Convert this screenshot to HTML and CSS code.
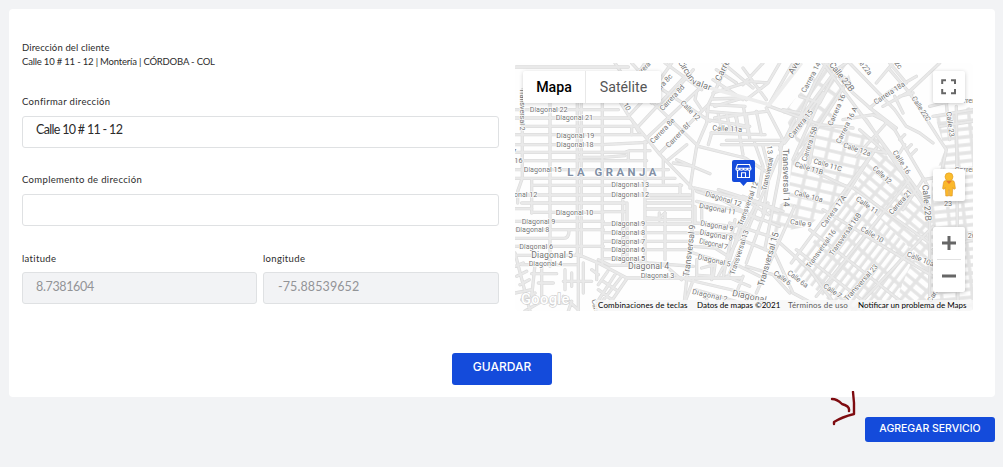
FILE: index.html
```html
<!DOCTYPE html>
<html lang="es">
<head>
<meta charset="utf-8">
<title>Dirección del cliente</title>
<link rel="stylesheet" href="styles.css">
</head>
<body>
<main class="card">
  <div class="columns">
    <form class="form">
      <div class="summary"><p><span class="t-title">Dirección del cliente</span></p><p><span class="t-addr">Calle 10 # 11 - 12 | Montería | CÓRDOBA - COL</span></p></div>
      <div class="field"><span class="label">Confirmar dirección</span><div class="input"><span class="t-calle">Calle 10 # 11 - 12</span></div></div>
      <div class="field"><span class="label">Complemento de dirección</span><div class="input"></div></div>
      <div class="pair">
        <div class="field"><span class="label low">latitude</span><div class="input disabled lat">8.7381604</div></div>
        <div class="field"><span class="label low">longitude</span><div class="input disabled">-75.88539652</div></div>
      </div>
    </form>
    <section class="map">
      <svg class="streets" viewBox="0 0 1374 744" width="458" height="248">
        <defs>
          <pattern id="p-trans" width="74" height="21" patternUnits="userSpaceOnUse" patternTransform="translate(860 600) rotate(-53) skewX(-5)"><rect width="74" height="21" class="ground"/><rect x="5" y="5" width="64" height="12" rx="2" class="block"/></pattern>
          <pattern id="p-mid" width="48" height="31" patternUnits="userSpaceOnUse" patternTransform="translate(830 300) rotate(13)"><rect width="48" height="31" class="ground"/><rect x="5" y="5" width="38" height="21" rx="2" class="block"/></pattern>
          <pattern id="p-east" width="46" height="24" patternUnits="userSpaceOnUse" patternTransform="translate(1300 10) rotate(-6)"><rect width="46" height="24" class="ground"/><rect x="5" y="5" width="36" height="14" rx="2" class="block"/></pattern>
          <pattern id="p-north" width="58" height="34" patternUnits="userSpaceOnUse" patternTransform="translate(880 40) rotate(-55)"><rect width="58" height="34" class="ground"/><rect x="6" y="6" width="47" height="23" rx="2" class="block"/></pattern>
          <pattern id="p-se" width="44" height="25" patternUnits="userSpaceOnUse" patternTransform="translate(1130 400) rotate(40)"><rect width="44" height="25" class="ground"/><rect x="5" y="5" width="34" height="15" rx="2" class="block"/></pattern>
          <g id="roads">
            <path d="M0 12H340M0 140H310M0 165H345M30 190H358M0 215H385M0 245H260L395 238M0 268H330L345 263H405M190 283H265L330 278M0 293H395M0 320H460M0 346H480M50 367H500M0 396H525M20 420H330M0 437H50M50 448H265M265 446H330M0 475H265M0 500H265M0 526H145Q162 526 162 503M0 550H265M0 577H190M20 605H185"/>
            <path d="M22 80V345L8 385V420M105 120V610M187 120V575M199 120V575M262 110V605M50 350V450M323 395V600M336 420V600M390 235V605M350 190V215M445 285V360M495 365V395M340 265V293M433 450V472M450 450V590"/>
            <path d="M265 483H530M265 509H530M265 535H530M265 560H530M265 587H330M395 405H530M395 420H530M395 438H530M395 470H530M395 465L432 466L450 450M330 585L400 600L535 610M540 480L660 490M540 510L660 515M535 550L600 555L640 580"/>
            <path d="M185 573L250 600L335 645H680M250 590L285 607H450L500 650M335 648L275 735M320 640L258 720M300 635L245 720M278 625L250 665M265 655L310 685M250 680L290 710M245 600V650M190 575V744M205 600V690M145 655H230M150 620V680M170 630V670M230 620L250 635"/>
            <path d="M0 570L45 744M60 605L50 700M80 610V700M50 632H125M70 660H115M0 610L25 600M5 640L35 625M15 665L43 650M0 690L50 680M20 710L60 690M30 744L80 715L150 720M160 744L170 715M145 700L190 740"/>
            <path d="M305 100L345 165L435 275L535 378M345 155L410 85L470 0M370 190L510 40M395 225L555 75M435 270L580 125M435 75L585 175M395 100L550 250M350 60L410 120M535 20L440 130M460 290L515 245M450 0L560 80M370 205L350 170M300 0L370 110M350 0L410 65M390 0L360 45"/>
            <path d="M533 375V485L505 744M525 375L535 310L545 250L575 180L580 125L640 0M560 140L540 110L545 85M485 290L585 332M475 300L535 310M540 375L690 410L760 455M545 415L680 445M560 420V475M540 430V480M550 250L690 285L760 330M545 385L620 410L730 470M610 380L690 405L790 445M575 145L690 155M590 108L680 105M590 125L690 130M575 170L700 190M588 210L750 215M590 210L580 245M610 155L620 200M635 155L645 195M660 155L670 190M685 130L700 215"/>
            <path d="M510 648L690 690L760 720M535 650L500 744M590 590V650M560 615L600 605L595 640L550 637M545 590V640M640 640L790 280M610 640L720 430M660 470L625 640M535 570L630 600M540 680L680 720M575 710L565 744M610 700L600 744"/>
          </g>
          <g id="roads-east">
            <path d="M-85 130L0 105M-85 165L70 145M-70 205L20 190M-50 232H120M-65 245H115M-20 160L0 275M10 155L20 225M40 145L55 215M70 135L125 240L240 90M75 130L150 0M80 130L230 185L330 195M0 15L70 110M10 110L75 60M-90 50L0 110M-90 90L20 55L75 60L110 0M-60 0L30 75M0 65L60 0M-80 20L-20 60"/>
            <path d="M35 240L60 310L45 400M60 250L80 330L60 450M115 240L110 330L85 460L65 560M0 400L120 445M-20 440L110 490M-40 480L95 525M-30 520L80 565M20 400L-40 590M75 420L10 600M155 430L40 690M10 610L90 635L140 690M-30 600L50 640M-50 640L20 670M0 640L-20 690M90 560L150 690L250 744M100 530L200 620L290 744"/>
            <path d="M110 250L280 20L310 0M150 290L240 90M155 300L230 185L310 60M160 300L320 375M200 300L220 190M150 210L215 60L250 0M170 100L230 120L270 45M120 140L170 150M155 170L110 260M240 0L560 430M250 0L330 90L455 200L555 370M375 130L460 195M300 170L390 155L420 170M350 200L430 270M320 250L430 270M370 170L550 440M340 280L430 180M300 410L390 270"/>
            <path d="M320 0L455 140L490 190L530 210L570 240M440 20L500 90L590 230L610 260L595 330M420 130L500 85L590 0M380 135L440 85L520 40M440 0L490 60M400 60L450 0M455 100L480 150M470 100L510 90M485 245L470 270M470 230L485 215M490 260L505 245M505 275L520 260M600 340L540 350L480 440M560 130L640 110M570 160L690 140M590 190L690 175M610 120L620 230M640 130L645 744M570 560L690 530M560 430V744"/>
            <path d="M145 600L400 255M220 700L500 350M330 744L570 490M330 375L560 540M240 440L570 640M200 500L510 744M160 560L400 744"/>
          </g>
        </defs>
        <rect width="1374" height="744" class="land"/>
        <path fill="url(#p-north)" d="M805 150L930 0H990L1010 60L940 210L860 270Z"/>
        <path fill="url(#p-mid)" d="M830 290L920 180L1100 230L1000 390L880 490L780 510L750 450L820 410Z"/>
        <path fill="url(#p-trans)" d="M830 620L1010 385L1240 570L1150 744H980Z"/>
        <path fill="url(#p-se)" d="M1010 385L1090 250L1250 430V744H1130L1200 570Z"/>
        <path fill="url(#p-east)" d="M1250 360L1290 260L1260 160L1374 130V744H1240Z"/>
        <use href="#roads" class="casing"/><g transform="translate(684 0)"><use href="#roads-east" class="casing"/></g>
        <use href="#roads" class="road"/><g transform="translate(684 0)"><use href="#roads-east" class="road"/></g>
        <path class="avenue" d="M585 75L763 125L860 0"/>
        <g class="names">
          <text x="44" y="147" textLength="114">Diagonal 22</text><text x="122" y="172" textLength="112">Diagonal 21</text>
          <text x="124" y="224" textLength="114">Diagonal 19</text><text x="124" y="251" textLength="112">Diagonal 18</text>
          <text x="26" y="326" textLength="114">Diagonal 15</text><text x="289" y="373" textLength="113">Diagonal 13</text>
          <text x="289" y="403" textLength="113">Diagonal 12</text><text x="-46" y="403" textLength="113">Diagonal 12</text>
          <text x="122" y="455" textLength="113">Diagonal 10</text><text x="20" y="482" textLength="101">Diagonal 9</text>
          <text x="2" y="506" textLength="101">Diagonal 8</text><text x="13" y="558" textLength="101">Diagonal 6</text>
          <text x="41" y="610" textLength="101">Diagonal 4</text><text x="289" y="490" textLength="101">Diagonal 9</text>
          <text x="289" y="516" textLength="101">Diagonal 8</text><text x="289" y="542" textLength="101">Diagonal 7</text>
          <text x="289" y="568" textLength="101">Diagonal 6</text><text x="289" y="594" textLength="101">Diagonal 5</text>
          <text x="377" y="644" textLength="101">Diagonal 3</text><text x="-8" y="273">7</text><text x="-2" y="301">16</text>
          <text class="big" x="49" y="585" textLength="125">Diagonal 5</text><text class="big" x="339" y="619" textLength="124">Diagonal 4</text>
          <text transform="translate(14 76) rotate(90)" textLength="127">Transversal 2</text>
          <text transform="translate(316 111) rotate(60)" textLength="39">e 10</text>
          <text transform="translate(414 243) rotate(-46)" textLength="96">Carrera 8e</text><text transform="translate(461 256) rotate(-46)" textLength="95">Carrera 8f</text>
          <text transform="translate(443 145) rotate(-47)" textLength="98">Carrera 8d</text><text transform="translate(407 113) rotate(-47)" textLength="98">Carrera 8c</text>
          <text transform="translate(362 52) rotate(-46)" textLength="94">Carrera 8a</text><text transform="translate(495 121) rotate(46)" textLength="74">Calle 12</text>
          <text class="big" transform="translate(488 -2) rotate(57)" textLength="70">Circun</text><text class="big" transform="translate(529 62) rotate(20)" textLength="60">valar</text>
          <text transform="translate(616 56) rotate(-65)" class="big" textLength="90">Carrera</text><text transform="translate(592 202) rotate(3)" textLength="89">Calle 11a</text>
          <text transform="translate(569 398) rotate(17)" textLength="113">Diagonal 12</text><text transform="translate(551 434) rotate(11)" textLength="112">Diagonal 11</text>
          <text transform="translate(555 487) rotate(10)" textLength="101">Diagonal 9</text><text transform="translate(553 514) rotate(11)" textLength="101">Diagonal 8</text>
          <text transform="translate(551 540) rotate(13)" textLength="88">Diagonal 7</text><text transform="translate(547 588) rotate(13)" textLength="101">Diagonal 5</text>
          <text transform="translate(530 692) rotate(13)" textLength="108">Diagonal 2</text><text class="big" transform="translate(650 698) rotate(12)" textLength="105">Diagonal</text>
          <text class="big" transform="translate(522 642) rotate(-83)" textLength="157">Transversal 9</text>
          <text transform="translate(658 637) rotate(-72)" textLength="140">Transversal 13</text><text transform="translate(682 490) rotate(-70)" textLength="140">Transversal 12</text>
          <text transform="translate(230 710) rotate(80)" textLength="70">Carrera</text>
          <text class="district" x="157" y="338" textLength="267">LA GRANJA</text>
        </g>
        <g class="names" transform="translate(684 0)">
          <text class="big" transform="translate(150 35) rotate(-60)">Avenida</text><text transform="translate(187 91) rotate(-62)" textLength="100">Carrera 14</text>
          <text class="big" transform="translate(257 5) rotate(52)" textLength="105">Calle 22B</text><text transform="translate(330 -22) rotate(52)" textLength="76">Calle 22a</text>
          <text transform="translate(410 -50) rotate(50)">Calle 22c</text><text transform="translate(398 125) rotate(-33)" textLength="107">Carrera 18a</text>
          <text transform="translate(505 106) rotate(57)" textLength="86">Calle 22C</text><text transform="translate(610 147) rotate(83)" textLength="76">Calle 23</text>
          <text transform="translate(267 190) rotate(-66)" textLength="101">Carrera 16</text><text transform="translate(291 244) rotate(-64)" textLength="120">Carrera 16 A</text>
          <text transform="translate(146 228) rotate(-51)" textLength="103">Carrera 15</text><text transform="translate(190 296) rotate(-72)" textLength="108">Carrera 15B</text>
          <text transform="translate(299 252) rotate(19)" textLength="86">Calle 12a</text><text transform="translate(210 300) rotate(17)" textLength="88">Calle 11C</text>
          <text transform="translate(154 310) rotate(17)" textLength="88">Calle 11B</text><text transform="translate(448 268) rotate(57)" textLength="80">Calle 16</text>
          <text transform="translate(387 318) rotate(43)" textLength="69">Calle 12</text><text transform="translate(152 395) rotate(15)" textLength="88">Calle 10a</text>
          <text transform="translate(337 411) rotate(35)" textLength="76">Calle 11</text><text transform="translate(140 482) rotate(10)" textLength="65">Calle 9</text>
          <text transform="translate(351 502) rotate(30)" textLength="76">Calle 10</text><text transform="translate(490 579) rotate(22)" textLength="86">Calle 10a</text>
          <text transform="translate(90 634) rotate(36)" textLength="59">Calle 6</text><text transform="translate(131 632) rotate(37)" textLength="72">Calle 6a</text><text transform="translate(239 673) rotate(33)" textLength="61">Calle 7</text>
          <text transform="translate(447 456) rotate(-48)" textLength="91">Carrera 21</text><text transform="translate(244 495) rotate(-54)" textLength="114">Carrera 17A</text>
          <text transform="translate(200 617) rotate(-54)" textLength="137">Transversal 16</text><text transform="translate(269 580) rotate(-55)" textLength="151">Transversal 16B</text>
          <text transform="translate(313 715) rotate(-48)" textLength="139">Transversal 23</text><text class="big" transform="translate(61 672) rotate(-74)" textLength="168">Transversal 15</text>
          <text class="big" transform="translate(119 257) rotate(89)" textLength="174">Transversal 14</text><text class="big" transform="translate(538 366) rotate(85)" textLength="109">Calle 22B</text>
          <text transform="translate(70 384) rotate(-78)" textLength="102">Transversal</text><text transform="translate(71 248) rotate(84)" textLength="26">13</text>
          <text x="635" y="120">Carrera</text><text x="635" y="326">Carrera</text><text x="674" y="526">26</text><text x="603" y="430">23</text>
          <text transform="translate(565 720) rotate(-60)">Carrera</text>
        </g>
        <text x="18" y="724" class="google" textLength="145">Google</text>
      </svg>
      <div class="maptypes"><span class="active">Mapa</span><span class="sat">Satélite</span></div>
      <div class="ctl full"><svg width="16" height="16" viewBox="0 0 16 16"><path d="M1.2 5V1.2H5M10 1.2h4V5M14 10v4.2h-4M5 14.2H1.2V10" fill="none" stroke="#666" stroke-width="2"/></svg></div>
      <div class="ctl pegman"><svg width="16" height="26" viewBox="0 0 16 26"><path d="M4.7 8.5h6.6q2 .2 2.2 2l.9 6q-1 1.2-2.1.2l-.5-1.2-.6 8.5H8.5V18h-1v6H4.8l-.6-8.5-.5 1.2q-1.2 1-2.1-.2l.9-6q.2-1.8 2.2-2Z" fill="#fbb82b" stroke="#db9321" stroke-width=".6"/><path d="M5.2 9h5.6L8 12Z" fill="#e8752c"/><circle cx="8" cy="4.8" r="4" fill="#fbbd2d" stroke="#df9a24" stroke-width=".6"/></svg></div>
      <div class="ctl zoom"><svg width="32" height="65" viewBox="0 0 32 65"><path d="M9 16H23M16 9V23M9 49H23" stroke="#666" stroke-width="3"/><path d="M4 32.5H28" stroke="#e2e2e2"/></svg></div>
      <svg class="pin" width="24" height="27" viewBox="0 0 24 27"><path d="M2 0h19q2 0 2 2v18q0 2-2 2h-6l-3.5 4L8 22H2q-2 0-2-2V2Q0 0 2 0Z" fill="#144bdb"/><g fill="none" stroke="#fff" stroke-width="1.1"><path d="M5.5 4.5h12l1.5 4.2q0 1.6-1.7 1.6t-2-1.5q-.3 1.5-2 1.5t-1.9-1.5q-.2 1.5-1.9 1.5T7.6 8.8q-.3 1.5-2 1.5T4 8.7ZM5.5 10.5v7h12v-7M9.5 17.5v-4.7h4v4.7M4.2 8.2h14.6"/></g></svg>
      <div class="legal"><span class="k">Combinaciones de teclas</span><span class="d">Datos de mapas ©2021</span><span class="u">Términos de uso</span><span class="n">Notificar un problema de Maps</span></div>
    </section>
  </div>
  <div class="actions"><button class="save"><span>GUARDAR</span></button></div>
</main>
<footer class="footer"><button class="add"><span>AGREGAR SERVICIO</span></button></footer>
<svg class="arrow" width="28" height="36" viewBox="0 0 28 36"><path d="M3 8Q8 8 13 13Q21 15 20 20M24 1L25 12V23Q13 26 5 31V33" fill="none" stroke="#7e0b10" stroke-width="2.4" stroke-linecap="round" stroke-linejoin="round"/></svg>
</body>
</html>
```
FILE: styles.css
```css
* { box-sizing: border-box; }
body { margin: 0; width: 1003px; height: 467px; overflow: hidden; background: #f2f3f5; padding: 9px 8px 0 9px; font: 9.5px/14px Lato, sans-serif; color: #2b2b2b; }
p { margin: 0; }
.card { height: 388px; background: #fff; border-radius: 4px; padding: 32px 22px 0 13px; }
.columns { display: flex; gap: 16px; height: 312px; }
.form { width: 477px; }
.summary { height: 54px; }
.field { height: 78px; }
.label { display: block; height: 21px; letter-spacing: .34px; }
.low { padding-top: 1px; }
.t-title { letter-spacing: .13px; }
.t-addr { letter-spacing: -.19px; }
.input { height: 32px; border: 1px solid #dfe1e3; border-radius: 3px; padding: 4px 13px; font-size: 12.5px; line-height: 18px; background: #fff; }
.t-calle { letter-spacing: -.68px; }
.disabled { padding-top: 5px; background: #f2f3f5; color: #929497; letter-spacing: .1px; }
.lat { letter-spacing: -.35px; }
.pair { display: grid; grid-template-columns: 235px 236px; gap: 6px; }
.pair .field + .field .input { padding-left: 14px; }
.map { position: relative; width: 458px; height: 248px; margin-top: 22px; overflow: hidden; border-radius: 4px; }
.streets { display: block; }
.land, .block { fill: #fefefe; }
.ground { fill: #e4e4e4; }
.casing { fill: none; stroke: #dcdcdc; stroke-width: 10; stroke-linecap: round; stroke-linejoin: round; }
.road { fill: none; stroke: #e9e9e9; stroke-width: 6; stroke-linecap: round; stroke-linejoin: round; }
.avenue { fill: none; stroke: #ededed; stroke-width: 11; }
.names { font: 22px Roboto, sans-serif; fill: #747474; stroke: #fff; stroke-width: 4px; stroke-linejoin: round; paint-order: stroke; }
.big { font-size: 26.5px; }
.district { font-size: 34px; font-weight: 700; fill: #8290a5; }
.google { font: 500 44px Roboto, sans-serif; fill: #fff; stroke: #cfcfcf; stroke-width: 4px; paint-order: stroke; }
.maptypes { position: absolute; left: 8px; top: 8px; display: flex; height: 32px; background: #fff; border-radius: 2px; box-shadow: 0 1px 4px rgba(0,0,0,.18); font: 14.2px/32px Roboto, sans-serif; color: #565656; }
.maptypes span { width: 63px; text-align: center; }
.maptypes .active { color: #000; font-weight: 500; border-right: 1px solid #e8e8e8; }
.maptypes .sat { width: 75px; }
.ctl { position: absolute; left: 418px; width: 32px; height: 32px; background: #fff; border-radius: 2px; box-shadow: 0 1px 4px rgba(0,0,0,.2); display: grid; place-items: center; }
.full { top: 8px; }
.pegman { top: 106px; }
.zoom { top: 164px; height: 65px; }
.pin { position: absolute; left: 217px; top: 97px; }
.legal { position: absolute; right: 0; bottom: 0; width: 378px; height: 11px; display: grid; grid-template-columns: 99px 91px 70px 118px; background: rgba(247,247,247,.86); font: 8px/11px Lato, sans-serif; color: #000; white-space: nowrap; }
.legal span { padding-left: 3px; }
.legal .k { letter-spacing: .13px; }
.legal .u { color: #5c5c5c; letter-spacing: .2px; }
.actions { display: flex; justify-content: center; padding-left: 9px; }
button { border: 0; border-radius: 3px; background: #144bdb; color: #fff; padding: 0; font-family: Inter, sans-serif; font-weight: 500; }
.save { width: 100px; height: 32px; font-size: 12px; line-height: 28px; padding-bottom: 4px; }
.footer { display: flex; justify-content: flex-end; padding-top: 20px; }
.add { width: 130px; height: 25px; font-size: 10.5px; line-height: 23px; padding-bottom: 2px; }
.arrow { position: absolute; left: 829px; top: 391px; }
```
